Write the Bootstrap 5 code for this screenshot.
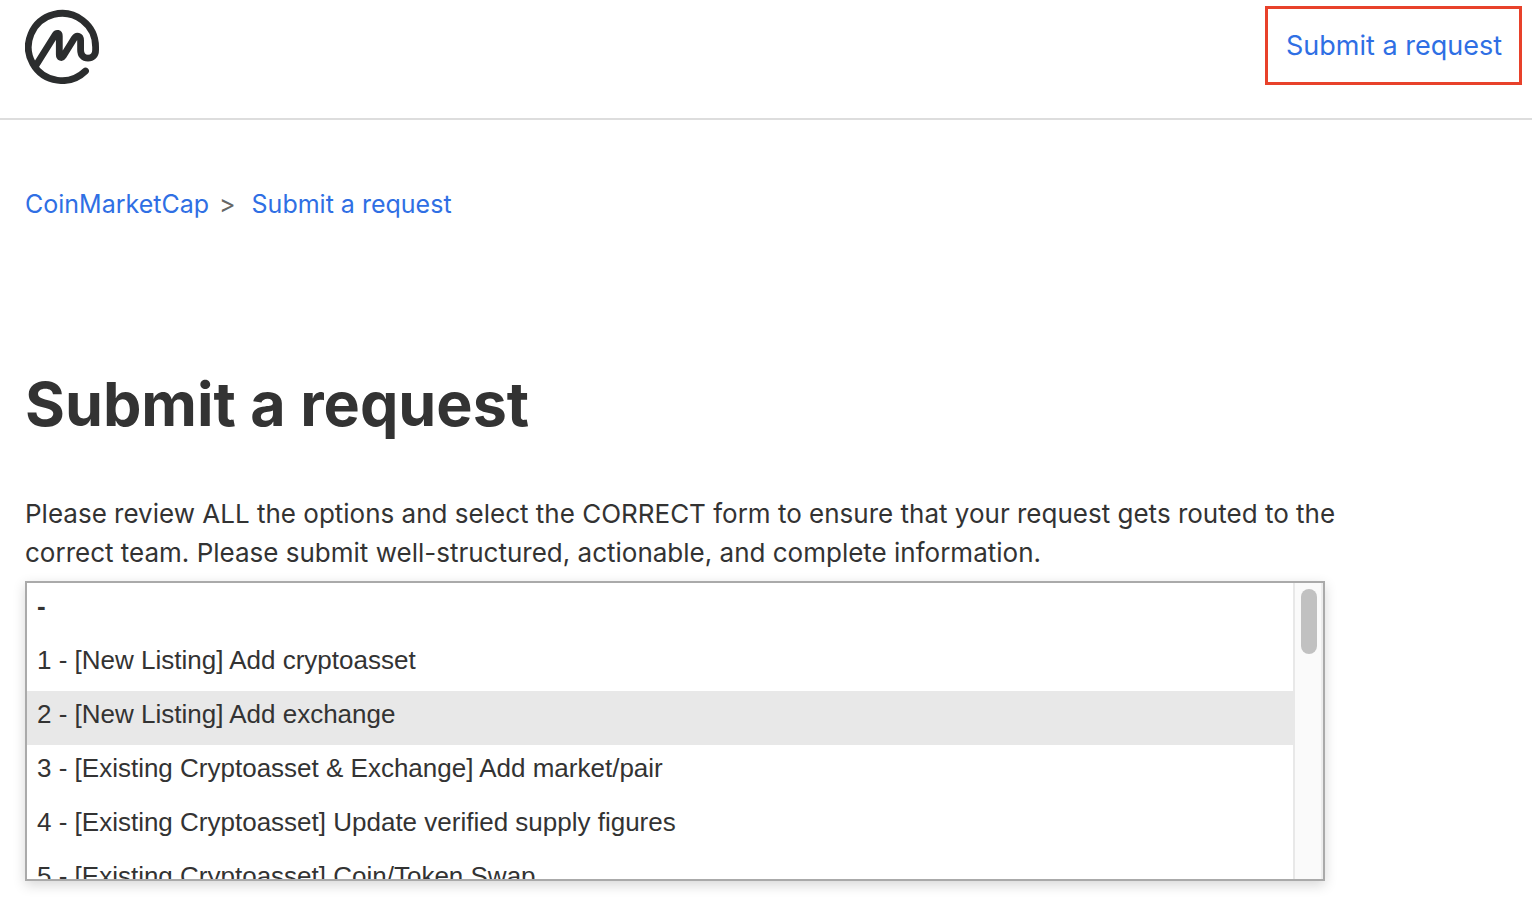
<!DOCTYPE html>
<html lang="en">
<head>
<meta charset="utf-8">
<meta name="viewport" content="width=device-width, initial-scale=1">
<title>Submit a request – CoinMarketCap</title>
<link href="https://cdn.jsdelivr.net/npm/bootstrap@5.3.0/dist/css/bootstrap.min.css" rel="stylesheet">
<style>
  body { font-family: Inter, sans-serif; font-size: 25px; line-height: 39px; color: #333; }
  a { color: #2f6fe4; text-decoration: none; }
  .gutter { padding-left: 25px; padding-right: 25px; padding-bottom: 27px; }
  .site-header { padding: 6px 10px 33px 25px; border-bottom: 2px solid #ddd; }
  .site-logo { width: 74px; height: 76px; }
  .request-link { font-size: 27px; padding: 17px 17px 17px 18px; border: 3px solid #e8412a; }
  .crumbs { padding-top: 65px; --bs-breadcrumb-divider: '>'; }
  .crumbs .breadcrumb-item + .breadcrumb-item { padding-left: 10px; }
  .crumbs .breadcrumb-item + .breadcrumb-item::before { color: #666; padding-right: 16px; }
  .page-title { font-size: 61px; line-height: 76px; margin: 142px 0 52px; }
  .form-intro { max-width: 1320px; font-size: 26px; margin-bottom: 9px; }
  .form-area { max-width: 1300px; }
  .picker { border: 2px solid #aaa; box-shadow: 0 4px 12px rgba(0, 0, 0, .16); max-height: 300px; }
  .picker select { font-family: "Liberation Sans", sans-serif; font-size: 26px; color: #333; overflow: hidden; outline: 0; }
  .picker option { padding: 8px 10px 15px; line-height: 30px; min-height: 54px; }
  .picker option.highlighted { background: #e8e8e8; }
  .scroll-track { width: 30px; padding: 6px 4px 0 6px; background: #fafafa; border-left: 2px solid #e8e8e8; border-right: 2px solid #ededed; }
  .scroll-thumb { width: 16px; height: 65px; background: #c1c1c1; }
</style>
</head>
<body>
<header class="site-header d-flex justify-content-between align-items-center">
  <a href="#" aria-label="CoinMarketCap home" class="d-flex">
    <svg class="site-logo" viewBox="0 -2 74 76" fill="none" stroke="#2b2d2e" stroke-width="6.8" stroke-linecap="round" stroke-linejoin="round" aria-hidden="true">
      <path d="M60.500 61A33.600 33.600 0 1 1 70.600 37V40C70.600 45.500 67.200 48.200 63 48.200C58.500 48.200 55.600 45.200 55.600 40V30.500C55.600 25.500 51.500 24.800 49.300 28.300L38.300 46C36.700 48.500 34.300 47.600 34.300 44.500V26C34.300 23 31.700 22.300 30 25L11.200 55"/>
    </svg>
  </a>
  <a href="#" class="request-link">Submit a request</a>
</header>
<main class="gutter">
  <nav class="crumbs" aria-label="Breadcrumb">
    <ol class="breadcrumb mb-0">
      <li class="breadcrumb-item"><a href="#">CoinMarketCap</a></li>
      <li class="breadcrumb-item"><a href="#">Submit a request</a></li>
    </ol>
  </nav>
  <h1 class="page-title fw-bold">Submit a request</h1>
  <form>
    <label for="request-form" class="form-intro d-block">Please review ALL the options and select the CORRECT form to ensure that your request gets routed to the correct team. Please submit well-structured, actionable, and complete information.</label>
    <div class="form-area picker d-flex overflow-hidden bg-white">
      <select id="request-form" size="6" class="flex-grow-1 border-0 p-0 bg-white">
        <option class="fw-bold">-</option>
        <option>1 - [New Listing] Add cryptoasset</option>
        <option class="highlighted">2 - [New Listing] Add exchange</option>
        <option>3 - [Existing Cryptoasset &amp; Exchange] Add market/pair</option>
        <option>4 - [Existing Cryptoasset] Update verified supply figures</option>
        <option>5 - [Existing Cryptoasset] Coin/Token Swap</option>
      </select>
      <div class="scroll-track flex-shrink-0" aria-hidden="true"><div class="scroll-thumb rounded-pill"></div></div>
    </div>
  </form>
</main>
<script src="https://cdn.jsdelivr.net/npm/bootstrap@5.3.0/dist/js/bootstrap.bundle.min.js"></script>
</body>
</html>
